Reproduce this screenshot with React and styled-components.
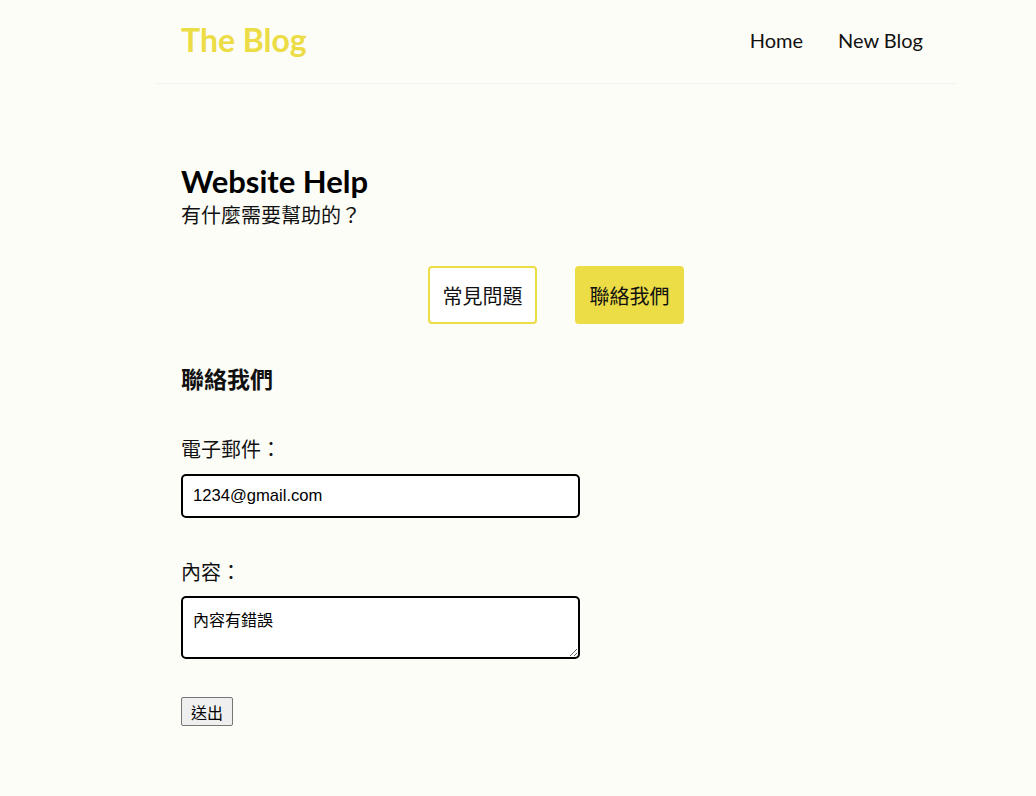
import React, { useState } from "react";
import styled, { createGlobalStyle } from "styled-components";

const GlobalStyle = createGlobalStyle`
  * { box-sizing: border-box; }
  body {
    margin: 0;
    background: #fdfdf7;
    font-family: Lato, "Noto Sans CJK TC", sans-serif;
    color: #111;
  }
`;

// the page sits a little right of centre in the capture
const Page = styled.div`
  padding-left: 76px;
`;

const Navbar = styled.nav`
  max-width: 800px;
  margin: 0 auto;
  padding: 20px 33px 20px 25px;
  height: 84px;
  display: flex;
  align-items: center;
  border-bottom: 1px solid #f2f2f2;
`;

const Logo = styled.h1`
  margin: 0 0 4px;
  font-size: 32px;
  font-weight: 700;
  color: #ecdc45;
`;

const Links = styled.div`
  margin-left: auto;
  margin-bottom: 4px;
  display: flex;
  gap: 35px;
`;

const NavLink = styled.a`
  font-size: 20px;
  color: #111;
  text-decoration: none;
  cursor: pointer;
`;

const Content = styled.main`
  max-width: 800px;
  margin: 0 auto;
  padding: 79px 25px 40px;
`;

const Title = styled.h2`
  margin: 0;
  font-size: 31px;
  line-height: 36px;
  font-weight: 700;
  color: #000;
`;

const Subtitle = styled.p`
  margin: 2px 0 0;
  font-size: 20px;
  line-height: 28px;
`;

const Tabs = styled.div`
  display: flex;
  justify-content: center;
  gap: 38px;
  margin-top: 37px;
`;

const Tab = styled.button`
  width: 109px;
  height: 58px;
  border: 2px solid #ecdc45;
  border-radius: 4px;
  background: ${(p) => (p.$active ? "#ecdc45" : "#fff")};
  font-family: inherit;
  font-size: 20px;
  color: #111;
  cursor: pointer;
`;

const SectionTitle = styled.h3`
  margin: 41px 0 0;
  font-size: 23px;
  line-height: 28px;
  font-weight: 700;
`;

const Form = styled.form`
  margin-top: 43px;
  display: flex;
  flex-direction: column;
  align-items: flex-start;
`;

const Label = styled.label`
  display: block;
  font-size: 20px;
  line-height: 27px;
  margin: ${(p) => (p.$first ? "0" : "41px")} 0 11px;
`;

const Input = styled.input`
  width: 399px;
  height: 44px;
  padding: 0 10px;
  border: 2px solid #000;
  border-radius: 5px;
  background: #fff;
  font-family: Arial, "Liberation Sans", sans-serif;
  font-size: 16.6px;
  color: #000;
  outline: none;
`;

const TextArea = styled.textarea`
  width: 399px;
  height: 63px;
  margin-top: -1px;
  padding: 11px 10px;
  border: 2px solid #000;
  border-radius: 5px;
  background: #fff;
  font-family: "Noto Sans CJK TC", sans-serif;
  font-size: 16px;
  line-height: 20px;
  color: #000;
  outline: none;
`;

const Submit = styled.button`
  margin-top: 38px;
  height: 29px;
  padding: 0 9px;
  font-family: "Noto Sans CJK TC", sans-serif;
  font-size: 16px;
  color: #000;
  background: #efefef;
  border: 1px solid #767676;
  border-radius: 2px;
`;

export default function App() {
  const [tab, setTab] = useState("contact");
  const [email, setEmail] = useState("1234@gmail.com");
  const [body, setBody] = useState("內容有錯誤");

  return (
    <Page>
      <GlobalStyle />
      <Navbar>
        <Logo>The Blog</Logo>
        <Links>
          <NavLink>Home</NavLink>
          <NavLink>New Blog</NavLink>
        </Links>
      </Navbar>
      <Content>
        <Title>Website Help</Title>
        <Subtitle>有什麼需要幫助的？</Subtitle>
        <Tabs>
          <Tab $active={tab === "faq"} onClick={() => setTab("faq")}>常見問題</Tab>
          <Tab $active={tab === "contact"} onClick={() => setTab("contact")}>聯絡我們</Tab>
        </Tabs>
        <SectionTitle>聯絡我們</SectionTitle>
        <Form onSubmit={(e) => e.preventDefault()}>
          <Label $first>電子郵件：</Label>
          <Input value={email} onChange={(e) => setEmail(e.target.value)} />
          <Label>內容：</Label>
          <TextArea value={body} onChange={(e) => setBody(e.target.value)} />
          <Submit type="submit">送出</Submit>
        </Form>
      </Content>
    </Page>
  );
}
